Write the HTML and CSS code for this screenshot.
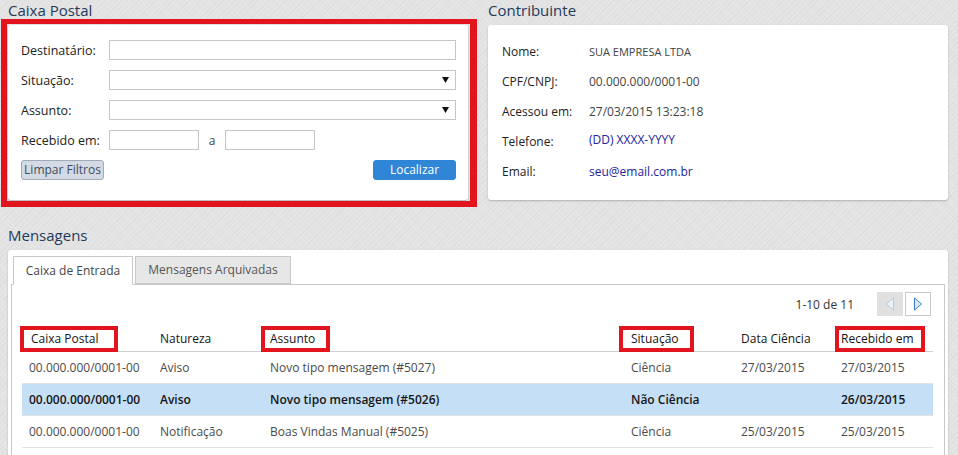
FILE: index.html
```html
<!DOCTYPE html>
<html lang="pt-BR">
<head>
<meta charset="utf-8">
<title>Caixa Postal</title>
<link rel="stylesheet" href="styles.css">
</head>
<body>
<div class="page">
  <div class="top">
    <section class="col">
      <h2 class="title">Caixa Postal</h2>
      <div class="card filter">
        <div class="form">
          <span class="lbl">Destinatário:</span>
          <div class="field"></div>
          <span class="lbl">Situação:</span>
          <div class="field select"><svg width="7" height="6" viewBox="0 0 7 6"><path d="M0 0H7L3.5 6Z" fill="#111"/></svg></div>
          <span class="lbl">Assunto:</span>
          <div class="field select"><svg width="7" height="6" viewBox="0 0 7 6"><path d="M0 0H7L3.5 6Z" fill="#111"/></svg></div>
          <span class="lbl">Recebido em:</span>
          <div class="dates">
            <div class="field date"></div>
            <span class="sep">a</span>
            <div class="field date"></div>
          </div>
        </div>
        <div class="actions">
          <button class="btn btn-clear" type="button">Limpar Filtros</button>
          <button class="btn btn-primary" type="button">Localizar</button>
        </div>
      </div>
    </section>
    <section class="col">
      <h2 class="title">Contribuinte</h2>
      <div class="card info">
        <span class="ilbl">Nome:</span><span class="ival name">SUA EMPRESA LTDA</span>
        <span class="ilbl">CPF/CNPJ:</span><span class="ival">00.000.000/0001-00</span>
        <span class="ilbl">Acessou em:</span><span class="ival">27/03/2015 13:23:18</span>
        <span class="ilbl">Telefone:</span><span class="ival link up">(DD) XXXX-YYYY</span>
        <span class="ilbl">Email:</span><span class="ival link">seu@email.com.br</span>
      </div>
    </section>
  </div>

  <section class="messages">
    <h2 class="title">Mensagens</h2>
    <div class="card msgcard">
      <div class="tabs">
        <div class="tab active">Caixa de Entrada</div>
        <div class="tab tab2">Mensagens Arquivadas</div>
      </div>
      <div class="panel">
        <div class="pager">
          <span class="count">1-10 de 11</span>
          <div class="pbtns">
            <span class="pbtn disabled"><svg width="10" height="14" viewBox="0 0 10 14"><path d="M8.5 1V13L1.5 7Z" fill="#eef4fb" stroke="#afcbe8"/></svg></span>
            <span class="pbtn"><svg width="10" height="14" viewBox="0 0 10 14"><path d="M1.5 1V13L8.5 7Z" fill="#dce9f8" stroke="#3a7ecf"/></svg></span>
          </div>
        </div>
        <div class="grid">
          <div class="row head">
            <div class="cell first"><span class="mk mk1"></span>Caixa Postal</div>
            <div class="cell">Natureza</div>
            <div class="cell"><span class="mk mk3"></span>Assunto</div>
            <div class="cell"><span class="mk mk4"></span>Situação</div>
            <div class="cell">Data Ciência</div>
            <div class="cell"><span class="mk mk6"></span>Recebido em</div>
          </div>
          <div class="row">
            <div class="cell">00.000.000/0001-00</div>
            <div class="cell">Aviso</div>
            <div class="cell">Novo tipo mensagem (#5027)</div>
            <div class="cell">Ciência</div>
            <div class="cell">27/03/2015</div>
            <div class="cell">27/03/2015</div>
          </div>
          <div class="row selected">
            <div class="cell">00.000.000/0001-00</div>
            <div class="cell">Aviso</div>
            <div class="cell">Novo tipo mensagem (#5026)</div>
            <div class="cell">Não Ciência</div>
            <div class="cell"></div>
            <div class="cell">26/03/2015</div>
          </div>
          <div class="row">
            <div class="cell">00.000.000/0001-00</div>
            <div class="cell">Notificação</div>
            <div class="cell">Boas Vindas Manual (#5025)</div>
            <div class="cell">Ciência</div>
            <div class="cell">25/03/2015</div>
            <div class="cell">25/03/2015</div>
          </div>
        </div>
      </div>
    </div>
  </section>
</div>
</body>
</html>
```

FILE: styles.css
```css
* { box-sizing: border-box; }

html, body {
  margin: 0;
  height: 455px;
  overflow: hidden;
}

body {
  font-family: "Open Sans", "Liberation Sans", sans-serif;
  font-size: 12px;
  color: #222;
  background-color: #e2e2e2;
  background-image:
    repeating-linear-gradient(45deg, rgba(255,255,255,0.18) 0 1px, transparent 1px 3px),
    repeating-linear-gradient(-45deg, rgba(0,0,0,0.025) 0 1px, transparent 1px 4px);
}

.page {
  padding: 0 10px 0 8px;
}

.top {
  display: flex;
  gap: 20px;
}

.col {
  width: 460px;
}

.title {
  margin: 0 0 5px;
  font-size: 15px;
  font-weight: 400;
  line-height: 20px;
  color: #1f3b5b;
}

.card {
  background: #fff;
  border-radius: 3px;
  box-shadow: 0 1px 2px rgba(0,0,0,0.22);
}

/* Filter card */
.filter {
  position: relative;
  height: 175px;
  padding: 15px 12px 20px 13px;
}

.filter::after {
  content: "";
  position: absolute;
  top: -6px;
  left: -7px;
  right: -9px;
  bottom: -7px;
  border-style: solid;
  border-color: #e2141d;
  border-width: 5px 7px 6px 6px;
  pointer-events: none;
}

.form {
  display: grid;
  grid-template-columns: 88px 347px;
  grid-auto-rows: 20px;
  row-gap: 10px;
  align-items: center;
}

.lbl {
  font-size: 12.5px;
  color: #222;
  white-space: nowrap;
}

.field {
  height: 20px;
  border: 1px solid #c6c6c6;
  background: #fff;
}

.select {
  display: flex;
  align-items: center;
  justify-content: flex-end;
  padding-right: 6px;
}

.select svg { display: block; }

.dates {
  display: flex;
  align-items: center;
}

.date { width: 90px; }

.sep {
  width: 26px;
  text-align: center;
  color: #444;
}

.actions {
  display: flex;
  justify-content: space-between;
  margin-top: 10px;
}

.btn {
  height: 20px;
  width: 83px;
  padding: 0;
  font-family: inherit;
  font-size: 12px;
  line-height: 18px;
  border-radius: 3px;
  cursor: pointer;
}

.btn-clear {
  background: #d3dae3;
  border: 1px solid #9eaab8;
  color: #3d4c5e;
}

.btn-primary {
  background: #2f86d7;
  border: 1px solid #2f86d7;
  color: #fff;
}

/* Contribuinte card */
.info {
  height: 175px;
  padding: 11px 14px 14px;
  display: grid;
  grid-template-columns: 87px 1fr;
  grid-auto-rows: 30px;
  align-items: center;
}

.ilbl {
  color: #222;
  white-space: nowrap;
}

.ival {
  font-size: 12px;
  color: #444;
  white-space: nowrap;
}

.ival.name { font-size: 11px; }

.link { color: #23239e; }
.up { margin-top: -3px; }

/* Messages */
.messages {
  margin-top: 25px;
}

.msgcard {
  width: 940px;
  padding: 6px 3px 40px;
}

.tabs {
  display: flex;
  gap: 2px;
  padding-left: 2px;
}

.tab {
  height: 29px;
  margin-bottom: -1px;
  border: 1px solid #c9c9c9;
  line-height: 27px;
  text-align: center;
  color: #444;
  white-space: nowrap;
}

.tab.active {
  width: 120px;
  background: #fff;
  border-bottom-color: #fff;
  position: relative;
}

.tab2 {
  width: 156px;
  height: 28px;
  line-height: 26px;
  background: #e7e7e7;
  color: #555;
}

.panel {
  border: 1px solid #c9c9c9;
  padding: 7px 13px 20px 10px;
}

.pager {
  display: flex;
  justify-content: flex-end;
  align-items: center;
  height: 24px;
  gap: 23px;
}

.count { color: #333; }

.pbtns {
  display: flex;
  gap: 2px;
}

.pbtn {
  width: 26px;
  height: 24px;
  display: flex;
  align-items: center;
  justify-content: center;
  border: 1px solid #c9c9c9;
  background: #fff;
}

.pbtn svg { display: block; }

.pbtn.disabled {
  background: #e0e0e0;
  border-color: #e0e0e0;
}

.grid {
  margin-top: 10px;
  margin-right: -2px;
}

.row {
  display: grid;
  grid-template-columns: 131px 110px 361px 110px 100px 99px;
  height: 32px;
  border-bottom: 1px solid #e3e3e3;
  color: #4a4a4a;
}

.row.head {
  height: 26px;
  border-bottom-color: #cfcfcf;
  color: #151515;
}

.row.selected {
  background: #c5dff7;
  color: #151515;
  font-weight: 600;
}

.cell {
  position: relative;
  display: flex;
  align-items: center;
  padding-left: 7px;
  white-space: nowrap;
}

.head .cell.first { padding-left: 9px; }

.mk {
  position: absolute;
  top: 0;
  bottom: -1px;
  border: 4px solid #e2141d;
}

.mk1 { left: -2px; width: 98px; }
.mk3 { left: -2px; width: 69px; }
.mk4 { left: -5px; width: 75px; }
.mk6 { left: 1px; width: 90px; }
```
